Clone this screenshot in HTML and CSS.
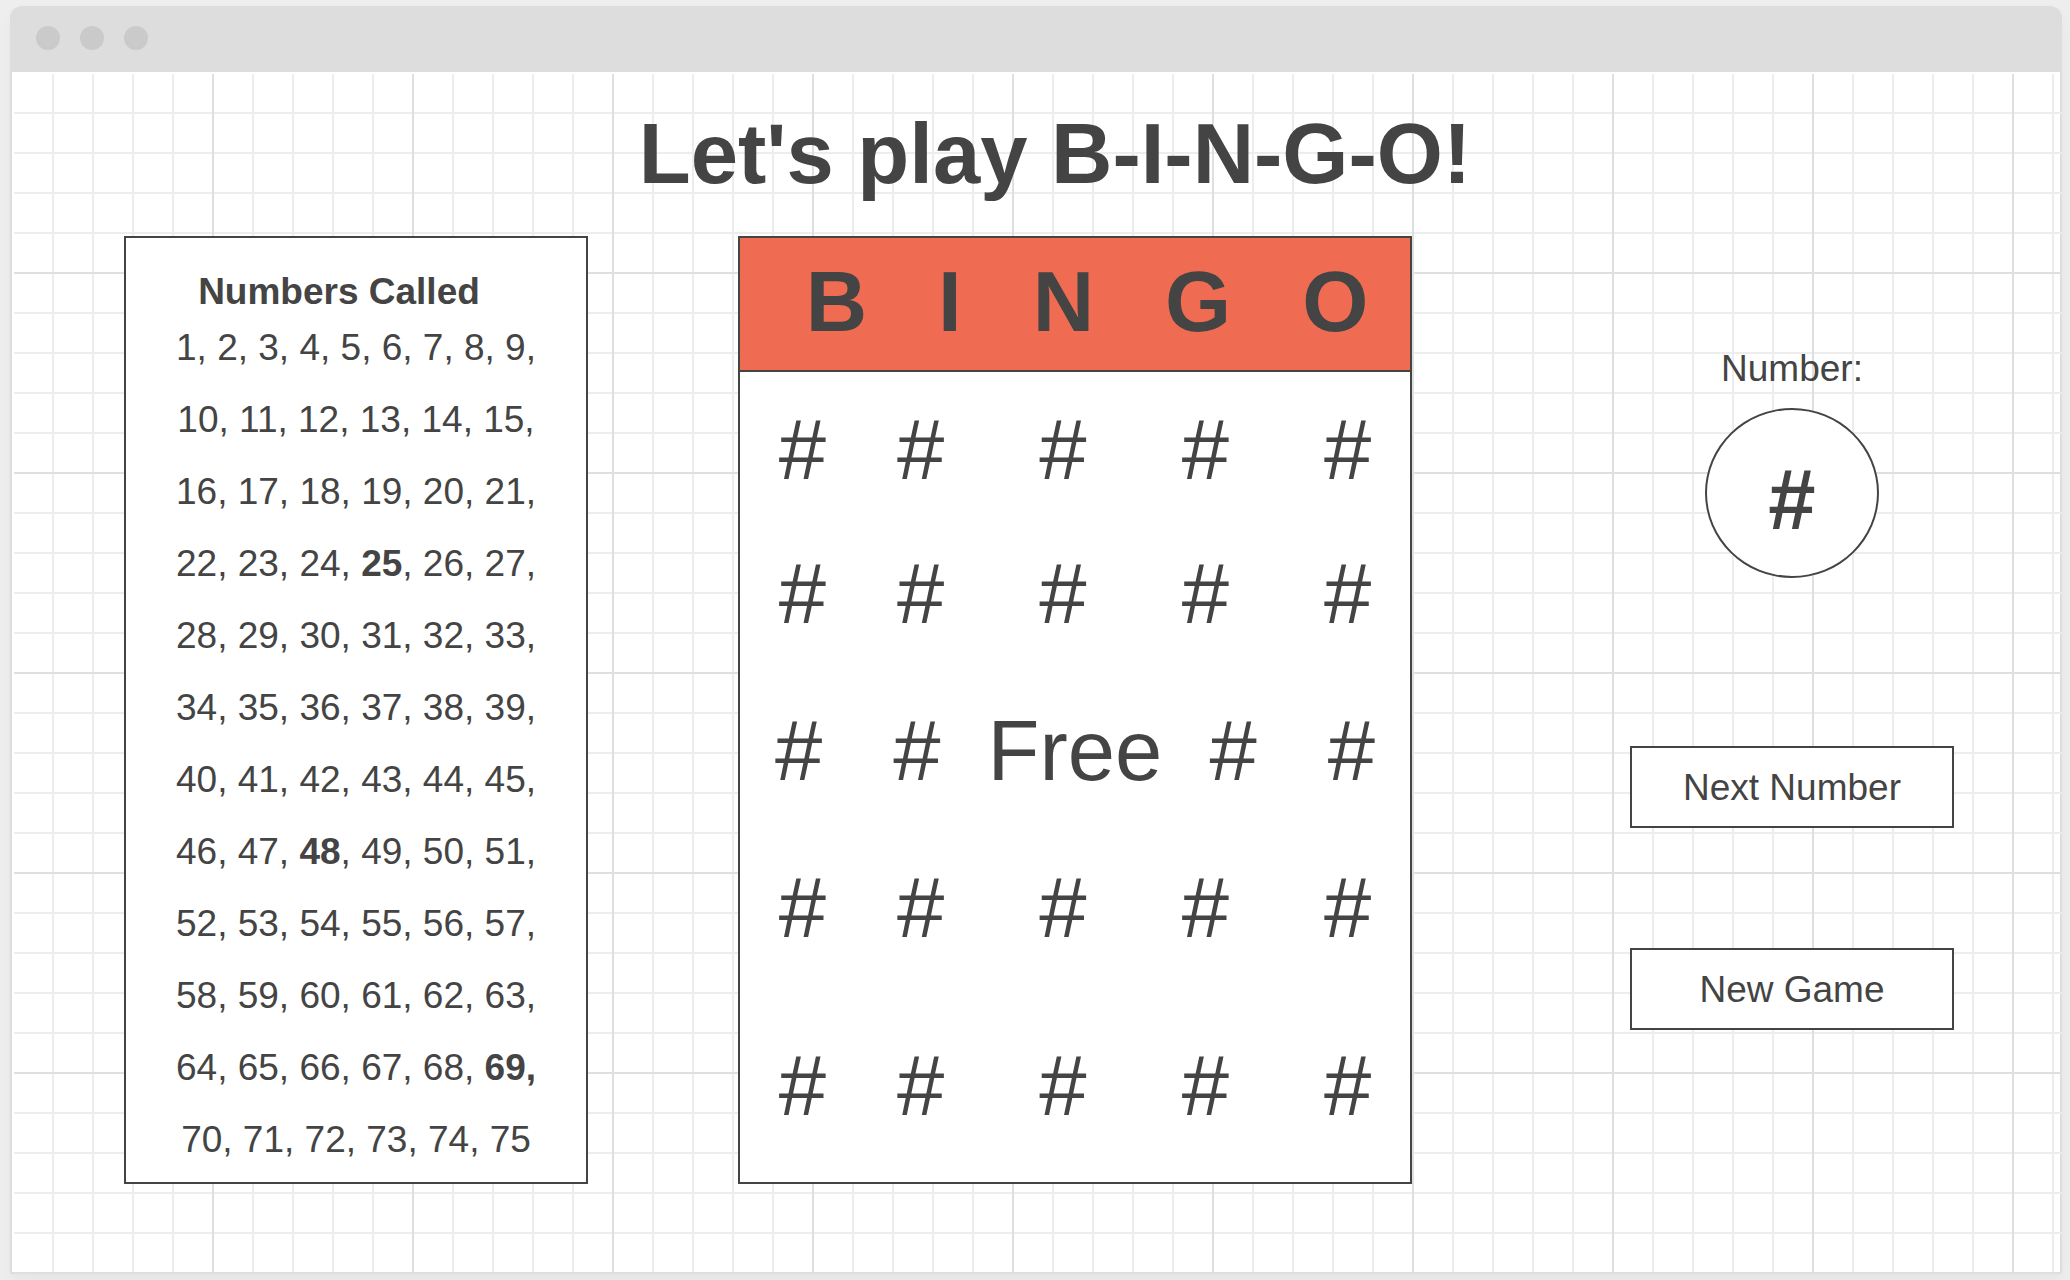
FILE: index.html
```html
<!DOCTYPE html>
<html lang="en">
<head>
<meta charset="utf-8">
<meta name="viewport" content="width=device-width, initial-scale=1">
<title>Let's play B-I-N-G-O!</title>
<link rel="stylesheet" href="styles.css">
</head>
<body>
<div class="window">
  <header class="titlebar">
    <span class="dot"></span>
    <span class="dot"></span>
    <span class="dot"></span>
  </header>
  <main class="canvas">
    <h1 class="title">Let's play B-I-N-G-O!</h1>
    <div class="columns">
      <section class="called">
        <h2 class="called-heading">Numbers Called</h2>
        <p class="called-list">1, 2, 3, 4, 5, 6, 7, 8, 9,<br>
10, 11, 12, 13, 14, 15,<br>
16, 17, 18, 19, 20, 21,<br>
22, 23, 24, <b>25</b>, 26, 27,<br>
28, 29, 30, 31, 32, 33,<br>
34, 35, 36, 37, 38, 39,<br>
40, 41, 42, 43, 44, 45,<br>
46, 47, <b>48</b>, 49, 50, 51,<br>
52, 53, 54, 55, 56, 57,<br>
58, 59, 60, 61, 62, 63,<br>
64, 65, 66, 67, 68, <b>69,</b><br>
70, 71, 72, 73, 74, 75</p>
      </section>

      <table class="card">
        <thead class="card-head">
          <tr class="card-row"><th>B</th><th>I</th><th>N</th><th>G</th><th>O</th></tr>
        </thead>
        <tbody class="card-body">
          <tr class="card-row"><td>#</td><td>#</td><td>#</td><td>#</td><td>#</td></tr>
          <tr class="card-row"><td>#</td><td>#</td><td>#</td><td>#</td><td>#</td></tr>
          <tr class="card-row free-row"><td>#</td><td>#</td><td class="free">Free</td><td>#</td><td>#</td></tr>
          <tr class="card-row"><td>#</td><td>#</td><td>#</td><td>#</td><td>#</td></tr>
          <tr class="card-row last-row"><td>#</td><td>#</td><td>#</td><td>#</td><td>#</td></tr>
        </tbody>
      </table>

      <section class="controls">
        <label class="draw-label" for="drawn">Number:</label>
        <output class="draw" id="drawn">#</output>
        <button class="button" type="button">Next Number</button>
        <button class="button" type="button">New Game</button>
      </section>
    </div>
  </main>
</div>
</body>
</html>
```

FILE: styles.css
```css
:root {
  --ink: #444;
  --chrome: #ddd;
  --line: #ededed;
  --line-major: #dfdfdf;
  --text: 37px;
  --display: 85px;
}

* {
  box-sizing: border-box;
}

body {
  margin: 0;
  min-height: 100vh;
  display: flex;
  padding: 6px 8px 6px 10px;
  background: #eee;
  color: var(--ink);
  font-family: "Liberation Sans", Arial, sans-serif;
  font-size: var(--text);
}

.window {
  flex: 1;
  display: flex;
  flex-direction: column;
  border-radius: 12px 12px 0 0;
  box-shadow: 0 8px 16px rgba(0, 0, 0, 0.04);
}

.titlebar {
  display: flex;
  gap: 20px;
  padding: 20px 26px 22px;
  border-radius: 12px 12px 0 0;
  background: var(--chrome);
}

.dot {
  width: 24px;
  height: 24px;
  border-radius: 50%;
  background: #cacaca;
}

.canvas {
  position: relative;
  flex: 1;
  padding: 34px 38px 88px 112px;
  border: solid var(--chrome);
  border-width: 0 2px 2px;
  background: #fff;
}

/* graph paper: a line every 40px, a darker one every 200px */
.canvas::before {
  content: "";
  position: absolute;
  inset: 2px -2px -2px 2px;
  background:
    linear-gradient(to right, transparent 198px, var(--line-major) 198px) 0 0 / 200px 200px,
    linear-gradient(to bottom, transparent 198px, var(--line-major) 198px) 0 0 / 200px 200px,
    linear-gradient(to right, transparent 38px, var(--line) 38px) 0 0 / 40px 40px,
    linear-gradient(to bottom, transparent 38px, var(--line) 38px) 0 0 / 40px 40px;
}

.title {
  position: relative;
  margin: 0 36px 34px 0;
  font-size: var(--display);
  line-height: 96px;
  text-align: center;
}

.columns {
  position: relative;
  display: grid;
  grid-template-columns: 464fr 674fr 460fr;
  gap: 150px;
}

.called {
  padding: 34px 0 6px;
  border: 2px solid var(--ink);
  background: #fff;
  text-align: center;
}

.called-heading {
  margin: 0;
  padding-right: 34px;
  font-size: var(--text);
  line-height: 40px;
}

.called-list {
  margin: 0;
  line-height: 72px;
  white-space: nowrap;
}

.card {
  display: flex;
  flex-direction: column;
  border: 2px solid var(--ink);
  background: #fff;
  font-size: var(--display);
  line-height: 96px;
}

.card-head {
  display: block;
  padding: 16px 0 20px 24px;
  border-bottom: 2px solid var(--ink);
  background: #ef6c52;
}

.card-body {
  display: block;
  padding: 30px 0 48px;
}

.card-row {
  display: flex;
  justify-content: center;
}

.card-row + .card-row {
  margin-top: 48px;
}

.card-row + .free-row,
.free-row + .card-row {
  margin-top: 61px;
}

.card-row + .last-row {
  margin-top: 82px;
}

.card th,
.card td {
  padding: 0;
}

.card th + th,
.card td + td,
.free-row td:last-child {
  margin-left: 71px;
}

.card-row:not(.free-row) td + td + td {
  margin-left: 95px;
}

.card .free {
  margin: 0 -24px 0 47px;
}

.card .free-row .free + td + td {
  margin-left: 71px;
}

.controls {
  display: flex;
  flex-direction: column;
  align-items: center;
  padding-top: 113px;
}

.draw-label {
  line-height: 40px;
}

.draw {
  display: flex;
  align-items: center;
  justify-content: center;
  width: 174px;
  height: 170px;
  margin: 19px 0 168px;
  padding-top: 14px;
  border: 2px solid var(--ink);
  border-radius: 50%;
  background: #fff;
  font-size: var(--display);
  font-weight: bold;
  line-height: 96px;
}

.button {
  width: 324px;
  padding: 20px 0 18px;
  border: 2px solid var(--ink);
  border-radius: 0;
  background: #fff;
  color: inherit;
  font: inherit;
  line-height: 40px;
  cursor: pointer;
}

.button + .button {
  margin-top: 120px;
}
```
